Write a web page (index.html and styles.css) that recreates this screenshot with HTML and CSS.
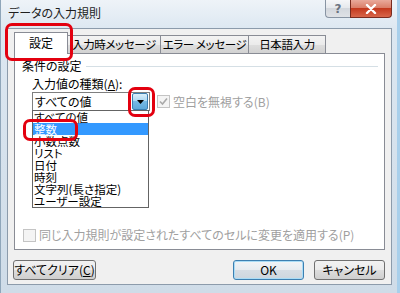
FILE: index.html
```html
<!DOCTYPE html>
<html>
<head>
  <meta charset="utf-8">
  <title>データの入力規則</title>
  <link rel="stylesheet" href="styles.css">
</head>
<body>
  <div class="window">
    <div class="title-bar">
      <span class="title">データの入力規則</span>
      <div class="title-buttons">
        <span class="help-button">?</span>
        <span class="close-button">
          <svg width="12" height="10" viewBox="0 0 12 10"><path d="M2 1 L10 9 M10 1 L2 9" stroke="#fff" stroke-width="2.4" stroke-linecap="round"/></svg>
        </span>
      </div>
    </div>

    <div class="client">
      <div class="tabs">
        <div class="tab tab-active">設定</div>
        <div class="tab tab-first">入力時メッセージ</div>
        <div class="tab">エラー メッセージ</div>
        <div class="tab">日本語入力</div>
      </div>

      <div class="panel">
        <div class="group-title">
          <span>条件の設定</span>
          <span class="group-line"></span>
        </div>
        <div class="field-label">入力値の種類(<u>A</u>):</div>
        <div class="field-row">
          <div class="combo">
            <span class="combo-value">すべての値</span>
            <span class="combo-button">
              <svg width="7" height="4" viewBox="0 0 7 4"><path d="M0 0 H7 L3.5 4 Z" fill="#000"/></svg>
            </span>
            <ul class="combo-list">
              <li>すべての値</li>
              <li class="selected">整数</li>
              <li>小数点数</li>
              <li>リスト</li>
              <li>日付</li>
              <li>時刻</li>
              <li>文字列(長さ指定)</li>
              <li>ユーザー設定</li>
            </ul>
          </div>
          <div class="check disabled">
            <span class="check-box">
              <svg width="9" height="9" viewBox="0 0 9 9"><path d="M1 4.5 L3.5 7 L8 1.5" fill="none" stroke="#a9a9a9" stroke-width="1.6"/></svg>
            </span>
            <span>空白を無視する(B)</span>
          </div>
        </div>
        <div class="check disabled apply-row">
          <span class="check-box"></span>
          <span>同じ入力規則が設定されたすべてのセルに変更を適用する(P)</span>
        </div>
      </div>

      <div class="footer">
        <button class="btn btn-wide">すべてクリア(<u>C</u>)</button>
        <button class="btn btn-default">OK</button>
        <button class="btn">キャンセル</button>
      </div>
    </div>

    <div class="mark mark-tab"></div>
    <div class="mark mark-button"></div>
    <div class="mark mark-item"></div>
  </div>
</body>
</html>
```

FILE: styles.css
```css
body {
  margin: 0;
  padding: 0;
  font-family: "Noto Sans CJK JP", sans-serif;
  font-size: 12px;
  font-feature-settings: "palt";
  color: #000;
}

.window {
  position: relative;
  width: 400px;
  height: 293px;
  display: flex;
  flex-direction: column;
  box-sizing: border-box;
  background: linear-gradient(to bottom, #eef3f8, #dce7f1 30px, #cfdce8);
  box-shadow: inset -3px 0 0 #a8cfeb, inset 1px 0 0 #8fa6ba;
}

/* title bar */

.title-bar {
  height: 28px;
  display: flex;
  justify-content: space-between;
  align-items: flex-start;
  flex-shrink: 0;
}

.title {
  padding: 6px 0 0 8px;
  line-height: 14px;
  font-size: 12px;
  color: #1e1e1e;
}

.title-buttons {
  display: flex;
  margin-right: 8px;
}

.help-button,
.close-button {
  height: 18px;
  box-sizing: border-box;
  display: flex;
  align-items: center;
  justify-content: center;
}

.help-button {
  width: 25px;
  border: 1px solid #8894a3;
  border-top: none;
  border-right: none;
  border-radius: 0 0 0 4px;
  background: linear-gradient(to bottom, #f5f6f8, #e4e7eb 50%, #d3d7dd 50%, #dfe2e6);
  color: #6a7380;
  font-family: "DejaVu Sans", sans-serif;
  font-weight: bold;
  font-size: 12px;
}

.close-button {
  width: 42px;
  border: 1px solid #7a2b1f;
  border-top: none;
  border-radius: 0 0 4px 0;
  background: linear-gradient(to bottom, #e9a99b, #d97a64 50%, #c4391e 50%, #d8664a);
}

/* client area */

.client {
  margin: 0 8px 8px 7px;
  height: 257px;
  box-sizing: border-box;
  background: #f0f0f0;
  border: 1px solid #8c9bab;
  padding-top: 3px;
  display: flex;
  flex-direction: column;
}

.tabs {
  display: flex;
  align-items: flex-end;
  height: 21px;
  padding-left: 6px;
}

.tab {
  height: 18px;
  box-sizing: border-box;
  border-top: 1px solid #898c95;
  border-right: 1px solid #898c95;
  background: linear-gradient(to bottom, #f3f3f3, #ebebeb 50%, #dedede 50%, #d2d2d2);
  text-align: center;
  line-height: 16px;
  font-size: 11.5px;
  letter-spacing: -0.4px;
  white-space: nowrap;
}

.tab-active {
  position: relative;
  z-index: 1;
  width: 54px;
  height: 22px;
  margin-bottom: -1px;
  border-left: 1px solid #898c95;
  background: #fff;
  line-height: 20px;
  font-size: 12px;
  letter-spacing: 0;
}

.tabs .tab:nth-child(2) { width: 93px; }
.tabs .tab:nth-child(3) { width: 88px; }
.tabs .tab:nth-child(4) { width: 77px; }

/* tab panel */

.panel {
  height: 197px;
  margin: 0 6px;
  box-sizing: border-box;
  border: 1px solid #898c95;
  background: #fff;
  display: flex;
  flex-direction: column;
}

.group-title {
  display: flex;
  align-items: center;
  margin: 5px 6px 0 7px;
  line-height: 14px;
}

.group-line {
  flex: 1;
  margin-left: 4px;
  border-top: 1px solid #d5dfe5;
}

.field-label {
  margin: 4px 0 0 17px;
  line-height: 14px;
}

.field-row {
  display: flex;
  align-items: center;
  margin: 1px 0 0 17px;
}

.combo {
  position: relative;
  width: 118px;
  height: 19px;
  box-sizing: border-box;
  border: 1px solid #7f7f7f;
  background: #fff;
  display: flex;
  align-items: center;
  justify-content: space-between;
  padding: 0 1px 0 2px;
}

.combo-value {
  line-height: 17px;
}

.combo-button {
  width: 16px;
  height: 17px;
  box-sizing: border-box;
  border: 1px solid #3c7fb1;
  border-radius: 2px;
  background: linear-gradient(to bottom, #dcf0fb, #a9d6f2 50%, #76b9e4 50%, #5ea8da);
  display: flex;
  align-items: center;
  justify-content: center;
}

.combo-list {
  position: absolute;
  z-index: 2;
  top: 17px;
  left: -1px;
  width: 117px;
  margin: 0;
  padding: 0;
  list-style: none;
  box-sizing: border-box;
  border: 1px solid #646464;
  background: #fff;
}

.combo-list li {
  height: 12px;
  line-height: 12px;
  font-size: 11.5px;
  padding-left: 1px;
  white-space: nowrap;
}

.combo-list li.selected {
  background: #3399ff;
  color: #fff;
}

.check {
  display: flex;
  align-items: center;
  line-height: 14px;
}

.check.disabled {
  color: #a0a0a0;
}

.field-row .check {
  margin-left: 7px;
}

.check-box {
  width: 13px;
  height: 13px;
  box-sizing: border-box;
  border: 1px solid #c4c4c4;
  background: #f4f4f4;
  margin-right: 3px;
  display: flex;
  align-items: center;
  justify-content: center;
}

.apply-row {
  margin: auto 0 7px 8px;
}

/* buttons */

.footer {
  display: flex;
  margin-top: 10px;
  padding: 0 6px 0 5px;
}

.btn {
  height: 20px;
  width: 71px;
  padding: 0;
  box-sizing: border-box;
  border: 1px solid #707070;
  border-radius: 3px;
  background: linear-gradient(to bottom, #f2f2f2, #ebebeb 50%, #dddddd 50%, #cfcfcf);
  font-family: "Noto Sans CJK JP", sans-serif;
  font-feature-settings: "palt";
  font-size: 12px;
  line-height: 16px;
  color: #000;
}

.btn-wide {
  width: 83px;
}

.btn-default {
  margin-left: auto;
  margin-right: 10px;
  border-color: #3c7fb1;
  box-shadow: inset 0 0 0 1px #a9dcf6;
  background: linear-gradient(to bottom, #f1f4f7, #e6ebf0 50%, #d6dde4 50%, #cdd6de);
}

/* red annotation marks */

.mark {
  position: absolute;
  z-index: 3;
  box-sizing: border-box;
  border: 3px solid #e3000f;
  border-radius: 7px;
}

.mark-tab {
  left: 5px;
  top: 23px;
  width: 68px;
  height: 38px;
}

.mark-button {
  left: 128px;
  top: 87px;
  width: 27px;
  height: 30px;
}

.mark-item {
  left: 23px;
  top: 119px;
  width: 55px;
  height: 22px;
}
```
